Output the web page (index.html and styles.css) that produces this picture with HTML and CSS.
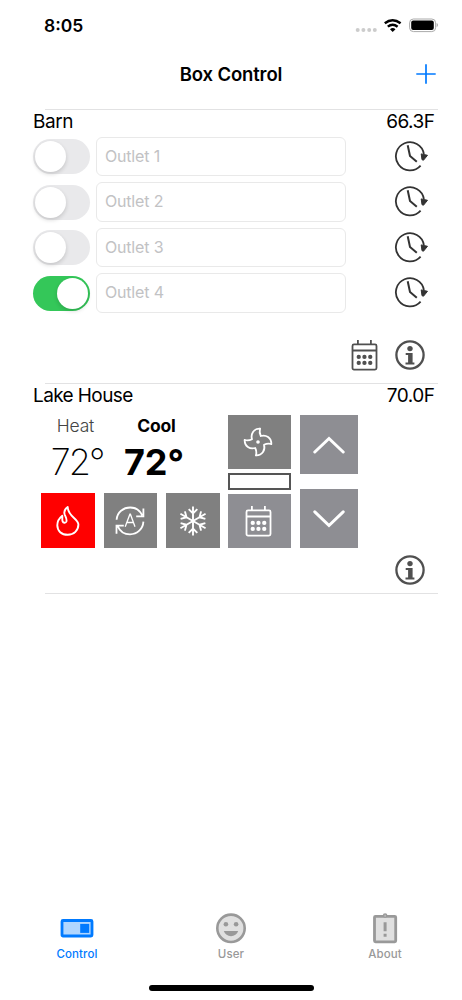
FILE: index.html
```html
<!DOCTYPE html>
<html lang="en">
<head>
<meta charset="utf-8">
<title>Box Control</title>
<link rel="stylesheet" href="styles.css">
</head>
<body>
<svg class="defs" width="0" height="0">
  <symbol id="clock" viewBox="0 0 36 32">
    <path d="M26.600 24.600A14.100 14.100 0 1 1 29.900 13" fill="none" stroke="#333" stroke-width="1.800"/>
    <path d="M13.700 4.200 16 14.900 22.800 20.700" fill="none" stroke="#333" stroke-width="2"/>
    <path d="M27.200 12.900 33.500 14.300 29.500 19.200 28 18.700Z" fill="#333" stroke="#333" stroke-width="1"/>
  </symbol>
  <symbol id="info" viewBox="0 0 30 30">
    <circle cx="15" cy="15" r="13.600" fill="none" stroke="#505050" stroke-width="2.300"/>
    <circle cx="15" cy="8.600" r="2.700" fill="#505050"/>
    <path d="M10.700 13h6.900v9.400h1.800v2h-8.900v-2h2.600v-7.300h-2.400z" fill="#505050"/>
  </symbol>
  <symbol id="calendar" viewBox="0 0 26 32">
    <g fill="none" stroke="currentColor" stroke-width="1.800">
      <rect x="1" y="5.400" width="24" height="25.200" rx="1.500"/>
      <path d="M1 11.500h24M6.400 1v4.400M19.400 1v4.400"/>
    </g>
    <path d="M7.200 17.900h.1m5.600 0h.1m5.700 0h.1M7.200 23.900h.1m5.600 0h.1m5.700 0h.1" fill="none" stroke="currentColor" stroke-width="4.200" stroke-linecap="round"/>
  </symbol>
</svg>

<header class="status">
  <span class="time">8:05</span>
  <svg class="status-icons" width="84" height="16" viewBox="0 0 84 16">
    <g fill="#ccc"><circle cx="3.700" cy="12" r="2"/><circle cx="9.400" cy="12" r="2"/><circle cx="15.200" cy="12" r="2"/><circle cx="20.800" cy="12" r="2"/></g>
    <g fill="none" stroke="#000" stroke-width="2.400"><path d="M30.800 5.300q7.700-6.300 15.800 0M33.800 8.700q4.800-4 9.800 0"/></g>
    <path d="M36 11.200q2.800-2.300 5.500 0l-2.800 2.700z"/>
    <rect x="55.600" y="1" width="26" height="12.600" rx="3.800" fill="none" stroke="#aaa"/>
    <rect x="57.200" y="2.600" width="22.600" height="9.400" rx="2"/>
    <path d="M82.600 5v4.200q1.400-.6 1.400-2.100t-1.400-2.100" fill="#aaa"/>
  </svg>
</header>

<nav class="nav">
  <h1 class="title">Box Control</h1>
  <svg class="add" width="20" height="20" viewBox="0 0 20 20"><path d="M10 .3v19.400M.3 10h19.400" stroke="#007aff" stroke-width="1.700"/></svg>
</nav>

<main>
  <section class="box barn">
    <div class="heading"><h2>Barn</h2><span class="temp">66.3F</span></div>
    <div class="outlets">
      <div class="outlet"><span class="switch"></span><div class="field">Outlet 1</div><svg class="clock"><use href="#clock"/></svg></div>
      <div class="outlet"><span class="switch"></span><div class="field">Outlet 2</div><svg class="clock"><use href="#clock"/></svg></div>
      <div class="outlet"><span class="switch"></span><div class="field">Outlet 3</div><svg class="clock"><use href="#clock"/></svg></div>
      <div class="outlet"><span class="switch on"></span><div class="field">Outlet 4</div><svg class="clock"><use href="#clock"/></svg></div>
    </div>
    <div class="actions"><svg class="calendar"><use href="#calendar"/></svg><svg class="info"><use href="#info"/></svg></div>
  </section>

  <section class="box lake">
    <div class="heading"><h2>Lake House</h2><span class="temp">70.0F</span></div>
    <div class="thermostat">
      <div class="left">
        <div class="setpoints">
          <div class="setpoint heat"><span class="label">Heat</span><span class="degrees">72°</span></div>
          <div class="setpoint cool"><span class="label">Cool</span><span class="degrees">72°</span></div>
        </div>
        <div class="modes">
          <div class="tile mode active">
            <svg width="26" height="32" viewBox="0 0 26 32"><path d="M12.700 2C9.200 4.500 8.700 7 9.800 9.800 11 12.500 12.100 14.500 11.400 16.500 10.700 18.300 8.300 18 7.600 16.300 7 14.800 7.500 12.600 7.300 10.800 4.500 13 2.300 16.500 2.300 20.300 2.300 26 6.500 29.800 12.700 29.800S23.400 25.500 23.400 19.600C23.400 13.300 13 12 12.700 2Z" fill="none" stroke="#fff" stroke-width="1.900" stroke-linejoin="round"/></svg>
          </div>
          <div class="tile mode">
            <svg width="30" height="30" viewBox="0 0 30 30"><g fill="none" stroke="#fff" stroke-width="1.800"><path d="M1.600 13.800C2 6 8.500 1.500 15.200 1.500c5.300 0 9.700 2.900 12 7.800M28.400 2.400v7.900h-7.200M28.400 15.600c-.4 7.300-6.100 12.700-13.400 12.700-5.600 0-10.100-3.100-12.200-8M1.500 27.800v-8.200h7.300"/><path d="m10.200 20.800 4.700-12.600h.5l4.600 12.600m-8.300-4.300h6.800" stroke-width="1.300"/></g></svg>
          </div>
          <div class="tile mode">
            <svg width="28" height="30" viewBox="0 0 28 30"><g fill="none" stroke="#fff" stroke-width="1.900"><path id="arm" d="M14 15V.5M9.700 3.200 14 7.500l4.300-4.300"/><use href="#arm" transform="rotate(60 14 15)"/><use href="#arm" transform="rotate(120 14 15)"/><use href="#arm" transform="rotate(180 14 15)"/><use href="#arm" transform="rotate(240 14 15)"/><use href="#arm" transform="rotate(300 14 15)"/></g></svg>
          </div>
        </div>
      </div>
      <div class="middle">
        <div class="tile fan">
          <svg width="30" height="30" viewBox="-15 -15 30 30"><g fill="none" stroke="#fff" stroke-width="1.800" stroke-linecap="round" stroke-linejoin="round"><path id="blade" d="M2-13.300C1.300-10.500 1.600-8.400 2.800-6 8-7.500 13.500-4.500 13.300 2"/><use href="#blade" transform="rotate(90)"/><use href="#blade" transform="rotate(180)"/><use href="#blade" transform="rotate(270)"/></g><circle r="1.800" fill="#fff"/></svg>
        </div>
        <div class="level"></div>
        <div class="tile schedule"><svg class="calendar"><use href="#calendar"/></svg></div>
      </div>
      <div class="right">
        <div class="tile step"><svg width="32" height="18" viewBox="0 0 32 18"><path d="M1.800 16 16 2.500 30.200 16" fill="none" stroke="#fff" stroke-width="3" stroke-linecap="round"/></svg></div>
        <div class="tile step"><svg width="32" height="18" viewBox="0 0 32 18"><path d="M1.800 1.800 16 15.500 30.200 1.800" fill="none" stroke="#fff" stroke-width="3" stroke-linecap="round"/></svg></div>
      </div>
    </div>
    <div class="actions"><svg class="info"><use href="#info"/></svg></div>
  </section>
</main>

<footer class="tabs">
  <div class="tab selected">
    <svg width="34" height="32" viewBox="0 0 34 32"><rect x="2" y="8.500" width="30" height="15.500" rx="1" fill="#b0d6ff" stroke="#007aff" stroke-width="2.800"/><path d="M20.200 11.900h9v9h-9z" fill="#007aff"/></svg>
    <span>Control</span>
  </div>
  <div class="tab">
    <svg width="34" height="32" viewBox="0 0 34 32"><circle cx="17" cy="16.300" r="13.700" fill="#e0e0e0" stroke="#999" stroke-width="2.600"/><g fill="#999"><circle cx="11.900" cy="12.200" r="2.300"/><circle cx="22.100" cy="12.200" r="2.300"/><path d="M9.800 19h14.400c-1.200 3.400-3.900 5.200-7.200 5.200s-6-1.800-7.200-5.200"/></g></svg>
    <span>User</span>
  </div>
  <div class="tab">
    <svg width="34" height="32" viewBox="0 0 34 32"><rect x="6.500" y="4.300" width="21.200" height="25.500" rx="1" fill="#e0e0e0" stroke="#999" stroke-width="2.800"/><path d="M15.600 10.300h3v9h-3zM15.600 21.800h3v3h-3z" fill="#999"/><circle cx="17.100" cy="3.500" r="2.300" fill="#999"/><path d="M16.600 2.700h1v2h-1z" fill="#ccc"/></svg>
    <span>About</span>
  </div>
</footer>
<div class="home"></div>
</body>
</html>
```

FILE: styles.css
```css
* { box-sizing: border-box; }
body {
  margin: 0;
  width: 462px;
  height: 1000px;
  display: flex;
  flex-direction: column;
  overflow: hidden;
  background: #fff;
  color: #000;
  font-family: Inter, Roboto, sans-serif;
}
svg { display: block; flex: none; }
.defs { display: none; }
h1, h2 { margin: 0; font-weight: 400; }

.status { height: 50px; padding: 15px 24px 0 44px; display: flex; justify-content: space-between; }
.time { font-size: 17.500px; font-weight: 600; line-height: 22px; }
.status-icons { margin-top: 3px; }

.nav { height: 59px; padding: 14px 26px 0; display: grid; grid-template-columns: 20px 1fr 20px; align-items: start; }
.title { grid-column: 2; margin-top: -1px; text-align: center; font-size: 18.500px; font-weight: 600; line-height: 22px; letter-spacing: -0.150px; }

.box { padding: 0 24px 0 33px; display: flex; flex-direction: column; }
.box::before { content: ""; flex: none; height: 1px; margin-left: 12px; background: #e2e2e3; }
.barn { height: 274px; }
.lake { height: 211px; }
.lake::after { content: ""; flex: none; height: 1px; margin: 8px 0 0 12px; background: #e2e2e3; }
.heading { height: 27px; padding-right: 3.500px; display: flex; justify-content: space-between; font-size: 19px; line-height: 23px; letter-spacing: -.5px; }
.heading h2 { font-size: 19px; letter-spacing: -.6px; }
.barn h2 { letter-spacing: -.4px; }

.outlets { display: grid; grid-auto-rows: 39.400px; row-gap: 6.100px; }
.outlet { display: flex; align-items: center; }
.switch { width: 57px; height: 35px; padding: 2px; border-radius: 18px; background: #e9e9eb; display: flex; }
.switch::before { content: ""; width: 31px; height: 31px; border-radius: 50%; background: #fff; box-shadow: 0 2px 4px rgba(0,0,0,.16); }
.switch.on { justify-content: flex-end; background: #34c759; }
.field { width: 250px; height: 39.400px; margin-left: 6.400px; padding-left: 7.500px; border: 1px solid #e9e9e9; border-radius: 6px; color: #c2c2c4; font-size: 16px; line-height: 37px; letter-spacing: -.150px; }
.clock { width: 36px; height: 32px; margin-left: 47.500px; }
.actions { display: flex; justify-content: flex-end; padding-right: 13.500px; }
.info { width: 30px; height: 30px; }
.calendar { width: 27px; height: 32px; }
.barn .actions { margin-top: 27px; gap: 16.500px; color: #505050; }
.barn .calendar { margin-top: -1px; }

.thermostat { height: 133px; margin-top: 4px; padding-left: 8px; display: flex; }
.left { width: 178.700px; }
.setpoints { height: 78px; display: flex; }
.setpoint { display: flex; flex-direction: column; align-items: center; }
.heat { width: 69px; }
.cool { width: 93px; }
.label { font-size: 17.500px; line-height: 22px; letter-spacing: -.2px; }
.degrees { font-size: 36px; line-height: 44px; margin-top: 3px; }
.heat .label { font-weight: 300; color: #444; }
.heat .degrees { font-weight: 200; letter-spacing: -2px; margin-left: 3px; }
.cool .label, .cool .degrees { font-weight: 700; }
.cool .degrees { margin-left: -5px; }
.modes { display: flex; justify-content: space-between; }
.tile { display: flex; align-items: center; justify-content: center; background: #808080; color: #fff; }
.mode { width: 53.600px; height: 55px; }
.mode.active { background: #f00; }
.middle { width: 62.600px; margin-left: 8.500px; display: flex; flex-direction: column; }
.fan { height: 53.500px; }
.fan svg { margin-right: 2px; }
.level { height: 17px; margin: 4.500px 0 4px; border: 2px solid #555; }
.schedule { height: 54px; background: #8e8e93; }
.schedule .calendar { margin-right: 2px; }
.right { width: 58px; margin-left: 9px; display: flex; flex-direction: column; justify-content: space-between; }
.step { height: 59px; background: #8e8e93; }
.lake .actions { margin-top: 7px; }

.tabs { margin-top: 318px; height: 74px; display: grid; grid-template-columns: repeat(3, 154px); }
.tab { display: flex; flex-direction: column; align-items: center; color: #999; font-size: 11.500px; font-weight: 500; line-height: 15px; letter-spacing: .1px; }
.tab span { margin-top: 3px; }
.tab.selected { color: #007aff; }
.home { width: 165px; height: 6px; margin: -1px auto 0; border-radius: 3px; background: #000; }
```
